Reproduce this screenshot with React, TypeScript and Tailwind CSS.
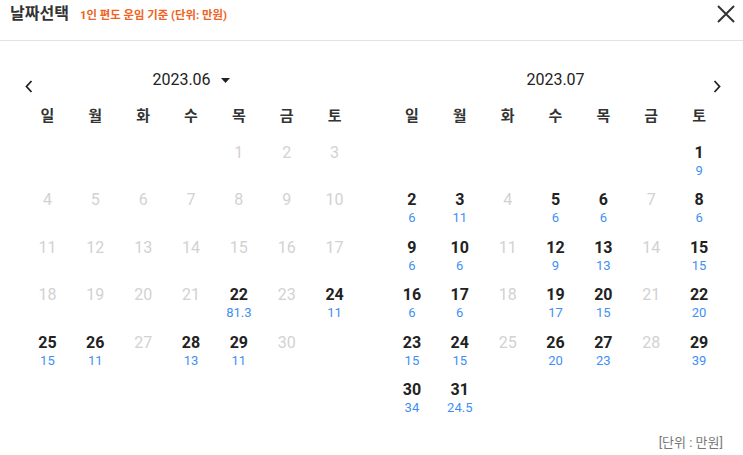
import React from "react";

type Cell = { d: number; p?: string } | null;

const juneP: Record<number, string> = { 22: "81.3", 24: "11", 25: "15", 26: "11", 28: "13", 29: "11" };
const julyP: Record<number, string> = {
  1: "9", 2: "6", 3: "11", 5: "6", 6: "6", 8: "6", 9: "6", 10: "6", 12: "9", 13: "13", 15: "15",
  16: "6", 17: "6", 19: "17", 20: "15", 22: "20", 23: "15", 24: "15", 26: "20", 27: "23", 29: "39",
  30: "34", 31: "24.5",
};

function build(offset: number, days: number, prices: Record<number, string>): Cell[][] {
  const cells: Cell[] = [];
  for (let i = 0; i < offset; i++) cells.push(null);
  for (let d = 1; d <= days; d++) cells.push({ d, p: prices[d] });
  while (cells.length % 7) cells.push(null);
  const rows: Cell[][] = [];
  for (let i = 0; i < cells.length; i += 7) rows.push(cells.slice(i, i + 7));
  return rows;
}

const WEEK = ["일", "월", "화", "수", "목", "금", "토"];

function Month({ title, rows, left }: { title: string; rows: Cell[][]; left: boolean }) {
  return (
    <div className="w-[335px]">
      <div className="relative h-[24px] mt-[27px] flex items-center justify-center">
        {left ? (
          <svg className="absolute left-[1px] top-[12px]" width="8" height="13" viewBox="0 0 8 13">
            <path d="M6.5 1 L1.5 6.5 L6.5 12" fill="none" stroke="#222" strokeWidth="1.8" />
          </svg>
        ) : (
          <svg className="absolute right-[2px] top-[12px]" width="8" height="13" viewBox="0 0 8 13">
            <path d="M1.5 1 L6.5 6.5 L1.5 12" fill="none" stroke="#222" strokeWidth="1.8" />
          </svg>
        )}
        <span className="text-[16px] text-[#222]">{title}</span>
        {left && (
          <svg className="ml-[10px]" width="9" height="5" viewBox="0 0 9 5">
            <path d="M0 0 L9 0 L4.5 5 Z" fill="#222" />
          </svg>
        )}
      </div>
      <div className="grid grid-cols-7 h-[30px] mt-[9px] items-center">
        {WEEK.map((w) => (
          <div key={w} className="text-center text-[15px] font-bold text-[#333]">{w}</div>
        ))}
      </div>
      <div className="mt-[12px]">
        {rows.map((r, i) => (
          <div key={i} className="grid grid-cols-7 h-[47.4px]">
            {r.map((c, j) => (
              <div key={j} className="flex flex-col items-center">
                {c && (
                  <>
                    <span
                      className={
                        "text-[16px] leading-[20px] " +
                        (c.p ? "font-bold text-[#222]" : "text-[#d2d2d2]")
                      }
                    >
                      {c.d}
                    </span>
                    {c.p && <span className="text-[13px] leading-[16px] text-[#3f8ff2]">{c.p}</span>}
                  </>
                )}
              </div>
            ))}
          </div>
        ))}
      </div>
    </div>
  );
}

export default function App() {
  const june = build(4, 30, juneP);
  const july = build(6, 31, julyP);
  return (
    <div
      className="w-[743px] h-[455px] bg-white relative overflow-hidden"
      style={{ fontFamily: "Roboto, 'Noto Sans CJK KR', sans-serif" }}
    >
      <div className="h-[41px] border-b border-[#e3e3e3] flex items-start pt-[4px] pl-[10px] pr-[8px]">
        <span className="text-[16px] leading-[20px] font-bold text-[#333]">날짜선택</span>
        <span className="ml-[11px] text-[11.4px] leading-[22px] font-bold text-[#f0621e]">1인 편도 운임 기준 (단위: 만원)</span>
        <div className="flex-1" />
        <svg width="18" height="18" viewBox="0 0 18 18" className="mt-[1px]">
          <path d="M1 1 L17 17 M17 1 L1 17" stroke="#333" strokeWidth="2" />
        </svg>
      </div>
      <div className="flex pl-[23.5px] pr-[20px] justify-between">
        <Month title="2023.06" rows={june} left />
        <Month title="2023.07" rows={july} left={false} />
      </div>
      <div className="absolute right-[20px] top-[433px] text-[13px] leading-[20px] text-[#777]">[단위 : 만원]</div>
    </div>
  );
}
